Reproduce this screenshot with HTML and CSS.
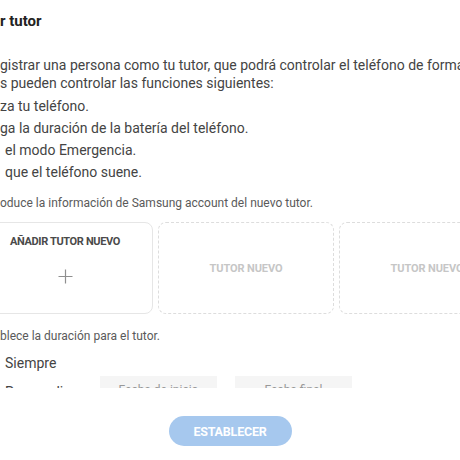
FILE: index.html
```html
<!DOCTYPE html>
<html lang="es">
<head>
<meta charset="utf-8">
<title>Añadir tutor</title>
<link rel="stylesheet" href="styles.css">
</head>
<body>
<div class="dialog">
  <div class="scroll">
    <h1 class="title">r tutor</h1>
    <p class="intro">gistrar una persona como tu tutor, que podrá controlar el teléfono de forma remota.<br>s pueden controlar las funciones siguientes:</p>
    <ul class="features">
      <li>za tu teléfono.</li>
      <li>ga la duración de la batería del teléfono.</li>
      <li class="indent">el modo Emergencia.</li>
      <li class="indent">que el teléfono suene.</li>
    </ul>
    <p class="hint">oduce la información de Samsung account del nuevo tutor.</p>
    <div class="cards">
      <div class="card card-add">
        <span class="card-label">AÑADIR TUTOR NUEVO</span>
        <svg class="plus" width="15" height="15" viewBox="0 0 15 15" aria-hidden="true"><path d="M7.5 0.5V14.5M0.5 7.5H14.5" stroke="#8f8f8f" stroke-width="1.2" fill="none"/></svg>
      </div>
      <div class="card card-empty"><span class="card-label">TUTOR NUEVO</span></div>
      <div class="card card-empty"><span class="card-label">TUTOR NUEVO</span></div>
    </div>
    <p class="hint hint-2">blece la duración para el tutor.</p>
    <div class="option">Siempre</div>
    <div class="option option-custom">
      <span class="custom-label">Personalizar</span>
      <span class="date-field">Fecha de inicio</span>
      <span class="date-field">Fecha final</span>
    </div>
  </div>
  <div class="footer">
    <button class="btn-set" type="button">ESTABLECER</button>
  </div>
</div>
</body>
</html>
```
FILE: styles.css
```css
html, body {
  margin: 0;
  padding: 0;
  background: #ffffff;
}
body {
  width: 460px;
  height: 460px;
  overflow: hidden;
  font-family: Roboto, "Noto Sans", "Liberation Sans", sans-serif;
  color: #444;
}
.dialog {
  display: flex;
  flex-direction: column;
  width: 460px;
  height: 460px;
}
.scroll {
  height: 388px;
  overflow: hidden;
  flex: none;
  padding-top: 11px;
  box-sizing: border-box;
}
.title {
  margin: 0;
  font-size: 15px;
  line-height: 20px;
  font-weight: 700;
  color: #222;
  white-space: nowrap;
}
.intro {
  margin: 25px 0 0;
  font-size: 14px;
  line-height: 18px;
  white-space: nowrap;
}
.features {
  list-style: none;
  margin: 3px 0 0;
  padding: 0;
  font-size: 14px;
  line-height: 22px;
  white-space: nowrap;
}
.features .indent {
  padding-left: 5px;
}
.hint {
  margin: 12px 0 0;
  font-size: 12px;
  line-height: 17px;
  color: #5a5a5a;
  white-space: nowrap;
}
.cards {
  display: flex;
  gap: 5px;
  margin: 10px 0 0 -23px;
}
.card {
  flex: none;
  width: 176px;
  height: 92px;
  box-sizing: border-box;
  border-radius: 8px;
  display: flex;
  flex-direction: column;
  align-items: center;
  justify-content: center;
}
.card-add {
  border: 1px solid #e6e6e6;
  justify-content: flex-start;
  padding-top: 12px;
}
.card-empty {
  border: 1px dashed #dddddd;
}
.card-label {
  font-size: 11px;
  font-weight: 700;
  letter-spacing: -0.35px;
  color: #4a4a4a;
}
.card-empty .card-label {
  color: #c6c6c6;
  letter-spacing: -0.1px;
}
.plus {
  display: block;
  margin-top: 21px;
}
.hint-2 {
  margin-top: 14px;
}
.option {
  margin: 8px 0 0 5px;
  font-size: 14px;
  line-height: 20px;
  white-space: nowrap;
}
.option-custom {
  display: flex;
  align-items: flex-start;
  margin: 3px 0 0 5px;
}
.custom-label {
  width: 95px;
  padding-top: 6px;
}
.date-field {
  width: 117px;
  height: 28px;
  margin-right: 18px;
  background: #f5f5f5;
  font-size: 12px;
  line-height: 28px;
  text-align: center;
  color: #999;
}
.footer {
  flex: 1;
  display: flex;
  justify-content: center;
  align-items: flex-start;
  padding-top: 28px;
}
.btn-set {
  width: 123px;
  height: 30px;
  border: none;
  border-radius: 15px;
  background: #a6c8ee;
  color: #ffffff;
  font-family: Roboto, "Noto Sans", "Liberation Sans", sans-serif;
  font-size: 12.5px;
  font-weight: 700;
  letter-spacing: -0.2px;
  padding: 0;
}
```
